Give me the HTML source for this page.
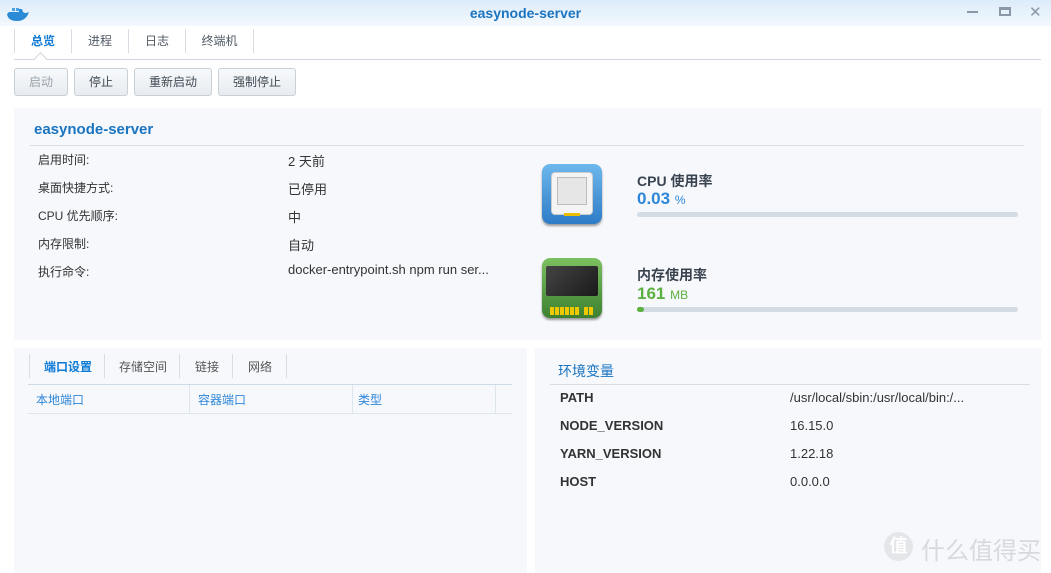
<!DOCTYPE html><html><head><meta charset="utf-8"><style>
*{margin:0;padding:0;box-sizing:border-box}
body{width:1051px;height:573px;background:#fff;font-family:"Liberation Sans","Noto Sans CJK SC",sans-serif;font-size:12px;color:#333;position:relative;overflow:hidden}
.a{position:absolute;white-space:nowrap}
.panel{position:absolute;background:#f6f8fc}
.btn{position:absolute;top:68px;height:28px;border:1px solid #c8d0d8;border-radius:3px;background:linear-gradient(#f7f9fb,#e8ecf0);font-size:12px;color:#404a54;text-align:center;line-height:26px}
.tab{position:absolute;top:29px;height:24px;line-height:24px;font-size:12px;color:#505a64;text-align:center;border-right:1px solid #d8dde3}
.bar{position:absolute;height:5px;background:#d3dce5;border-radius:3px}
.lbl{font-size:12px;color:#333}
.v{font-size:13px;color:#333}
.b{font-weight:bold}
</style></head><body>
<div class="a" style="left:0;top:0;width:1051px;height:26px;background:linear-gradient(#dcecfa,#f3f8fd)"></div>
<svg class="a" style="left:6px;top:6px" width="24" height="16" viewBox="0 0 24 16"><path d="M1 8 Q2 15 11 15 Q20 15 23 6 Q19 8 17 6 L16 3 L13 3 L13 6 L3 6 Z" fill="#2a8ad6"/><rect x="6" y="2" width="3" height="3" fill="#4aa0e0"/><rect x="10" y="2" width="3" height="3" fill="#4aa0e0"/></svg>
<div class="a b" style="left:0;width:1051px;top:5px;text-align:center;font-size:14px;color:#1a74c0">easynode-server</div>
<div class="a" style="left:967px;top:11px;width:11px;height:2px;background:#8b98a5"></div>
<div class="a" style="left:999px;top:7px;width:12px;height:9px;border:2px solid #8b98a5;border-top-width:3px"></div>
<div class="a" style="left:1029px;top:3px;font-size:15px;color:#8b98a5">✕</div>
<div class="tab" style="left:14px;width:58px;color:#0d7ad6;font-weight:bold;border-left:1px solid #d8dde3">总览</div>
<div class="tab" style="left:72px;width:57px">进程</div>
<div class="tab" style="left:129px;width:57px">日志</div>
<div class="tab" style="left:186px;width:68px">终端机</div>
<div class="a" style="left:14px;top:59px;width:1027px;height:1px;background:#cfd6dd"></div>
<div class="a" style="left:36px;top:54px;width:9px;height:9px;background:#fff;border-left:1px solid #cfd6dd;border-top:1px solid #cfd6dd;transform:rotate(45deg)"></div>
<div class="btn" style="left:14px;width:54px;color:#9aa3ac">启动</div>
<div class="btn" style="left:74px;width:54px">停止</div>
<div class="btn" style="left:134px;width:78px">重新启动</div>
<div class="btn" style="left:218px;width:78px">强制停止</div>

<div class="panel" style="left:14px;top:108px;width:1027px;height:232px"></div>
<div class="a b" style="left:34px;top:121px;font-size:15px;color:#1a74c0">easynode-server</div>
<div class="a" style="left:30px;top:145px;width:994px;height:1px;background:#d6dde4"></div>
<div class="a lbl" style="left:38px;top:151px">启用时间:</div><div class="a v" style="left:288px;top:151px">2 天前</div>
<div class="a lbl" style="left:38px;top:179px">桌面快捷方式:</div><div class="a v" style="left:288px;top:179px">已停用</div>
<div class="a lbl" style="left:38px;top:207px">CPU 优先顺序:</div><div class="a v" style="left:288px;top:207px">中</div>
<div class="a lbl" style="left:38px;top:235px">内存限制:</div><div class="a v" style="left:288px;top:235px">自动</div>
<div class="a lbl" style="left:38px;top:263px">执行命令:</div><div class="a v" style="left:288px;top:262px">docker-entrypoint.sh npm run ser...</div>

<div class="a" style="left:542px;top:164px;width:60px;height:60px;border-radius:8px;background:linear-gradient(#6db8ec,#2d7cc6);box-shadow:0 2px 2px #999"></div>
<div class="a" style="left:551px;top:172px;width:42px;height:43px;border-radius:4px;background:#f4f4f4;border:1px solid #ccc"></div>
<div class="a" style="left:557px;top:177px;width:30px;height:28px;background:#e6e6e6;border:1px solid #bbb"></div>
<div class="a" style="left:564px;top:213px;width:16px;height:3px;background:#e8c000"></div>
<div class="a" style="left:542px;top:258px;width:60px;height:60px;border-radius:8px;background:linear-gradient(#7cc060,#3d8030);box-shadow:0 2px 2px #999"></div>
<div class="a" style="left:546px;top:266px;width:52px;height:30px;background:linear-gradient(135deg,#444,#1a1a1a);border-radius:2px"></div>
<div class="a" style="left:550px;top:307px;width:30px;height:8px;background:repeating-linear-gradient(90deg,#f0c800 0 4px,transparent 4px 5px)"></div>
<div class="a" style="left:584px;top:307px;width:10px;height:8px;background:repeating-linear-gradient(90deg,#f0c800 0 4px,transparent 4px 5px)"></div>

<div class="a b" style="left:637px;top:171px;font-size:14px;color:#3a4450">CPU 使用率</div>
<div class="a b" style="left:637px;top:189px;font-size:17px;color:#2d86d8">0.03 <span style="font-size:12px;font-weight:normal">%</span></div>
<div class="bar" style="left:637px;top:212px;width:381px"></div>
<div class="a b" style="left:637px;top:265px;font-size:14px;color:#3a4450">内存使用率</div>
<div class="a b" style="left:637px;top:284px;font-size:17px;color:#5cb040">161 <span style="font-size:12px;font-weight:normal">MB</span></div>
<div class="bar" style="left:637px;top:307px;width:381px"></div>
<div class="a" style="left:637px;top:307px;width:7px;height:5px;background:#5cb040;border-radius:3px"></div>

<div class="panel" style="left:14px;top:348px;width:513px;height:225px"></div>
<div class="a" style="left:29px;top:354px;width:1px;height:24px;background:#d8dde3"></div>
<div class="a b" style="left:44px;top:358px;color:#0d7ad6">端口设置</div>
<div class="a" style="left:104px;top:354px;width:1px;height:24px;background:#d8dde3"></div>
<div class="a" style="left:119px;top:358px;color:#555">存储空间</div>
<div class="a" style="left:179px;top:354px;width:1px;height:24px;background:#d8dde3"></div>
<div class="a" style="left:195px;top:358px;color:#555">链接</div>
<div class="a" style="left:232px;top:354px;width:1px;height:24px;background:#d8dde3"></div>
<div class="a" style="left:248px;top:358px;color:#555">网络</div>
<div class="a" style="left:286px;top:354px;width:1px;height:24px;background:#d8dde3"></div>
<div class="a" style="left:28px;top:384px;width:484px;height:1px;background:#cddbe7"></div>
<div class="a" style="left:28px;top:413px;width:484px;height:1px;background:#dde5ed"></div>
<div class="a" style="left:189px;top:385px;width:1px;height:28px;background:#dde5ed"></div>
<div class="a" style="left:352px;top:385px;width:1px;height:28px;background:#dde5ed"></div>
<div class="a" style="left:495px;top:385px;width:1px;height:28px;background:#dde5ed"></div>
<div class="a" style="left:36px;top:391px;color:#2d86d8">本地端口</div>
<div class="a" style="left:198px;top:391px;color:#2d86d8">容器端口</div>
<div class="a" style="left:358px;top:391px;color:#2d86d8">类型</div>

<div class="panel" style="left:535px;top:348px;width:506px;height:225px"></div>
<div class="a" style="left:558px;top:361px;font-size:14px;color:#1a74c0">环境变量</div>
<div class="a" style="left:550px;top:384px;width:480px;height:1px;background:#d6dde4"></div>
<div class="a b v" style="left:560px;top:390px">PATH</div><div class="a v" style="left:790px;top:390px">/usr/local/sbin:/usr/local/bin:/...</div>
<div class="a b v" style="left:560px;top:418px">NODE_VERSION</div><div class="a v" style="left:790px;top:418px">16.15.0</div>
<div class="a b v" style="left:560px;top:446px">YARN_VERSION</div><div class="a v" style="left:790px;top:446px">1.22.18</div>
<div class="a b v" style="left:560px;top:474px">HOST</div><div class="a v" style="left:790px;top:474px">0.0.0.0</div>

<div class="a" style="left:884px;top:532px;width:29px;height:29px;border-radius:50%;background:#e4e6e9;color:#fff;font-size:18px;text-align:center;line-height:28px;font-weight:bold">值</div>
<div class="a" style="left:921px;top:531px;font-size:24px;color:#d6d9dd">什么值得买</div>
</body></html>
